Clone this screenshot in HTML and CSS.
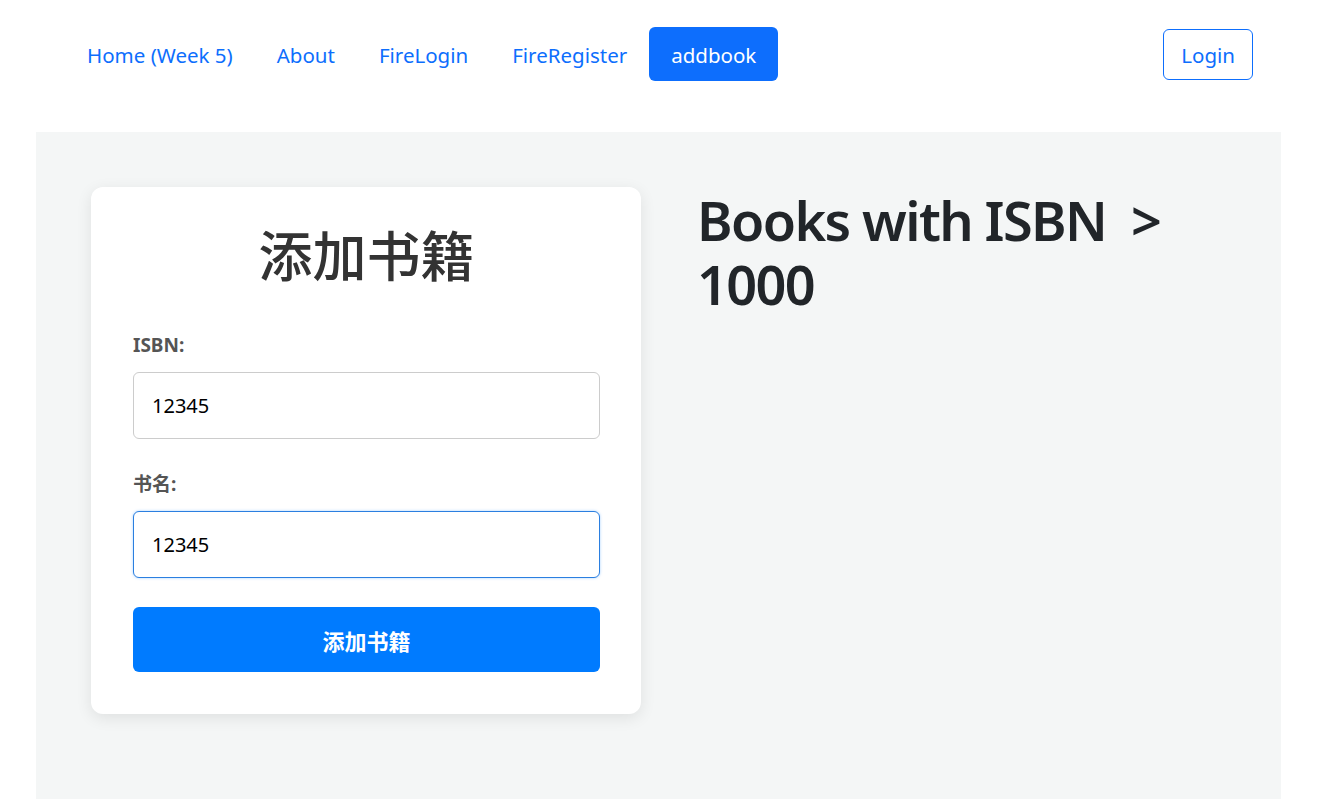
FILE: index.html
```html
<!DOCTYPE html>
<html lang="zh">
<head>
<meta charset="utf-8">
<title>addbook</title>
<link rel="stylesheet" href="styles.css">
</head>
<body>
<header class="navbar">
  <nav class="nav-links">
    <a class="nav-link" href="#">Home (Week 5)</a>
    <a class="nav-link" href="#">About</a>
    <a class="nav-link" href="#">FireLogin</a>
    <a class="nav-link" href="#">FireRegister</a>
    <a class="nav-link active" href="#">addbook</a>
  </nav>
  <a class="login-btn" href="#">Login</a>
</header>
<main class="page">
  <section class="card">
    <h1 class="card-title">添加书籍</h1>
    <form class="form">
      <div class="field">
        <label class="label" for="isbn">ISBN:</label>
        <input class="input" id="isbn" type="text" value="12345">
      </div>
      <div class="field">
        <label class="label" for="name">书名:</label>
        <input class="input focused" id="name" type="text" value="12345">
      </div>
      <button class="submit" type="button">添加书籍</button>
    </form>
  </section>
  <section class="results">
    <h2 class="results-title">Books with ISBN &nbsp;&gt; 1000</h2>
  </section>
</main>
</body>
</html>
```
FILE: styles.css
```css
* { box-sizing: border-box; }
html, body { margin: 0; padding: 0; background: #fff; }
body {
  font-family: "Noto Sans", "Noto Sans CJK SC", sans-serif;
  color: #212529;
  height: 799px;
  overflow: hidden;
}
.navbar {
  display: flex;
  align-items: flex-start;
  justify-content: space-between;
  padding: 27px 69px 0 65px;
  height: 132px;
}
.nav-links { display: flex; align-items: center; }
.nav-link {
  font-size: 20.5px;
  line-height: 30px;
  padding: 13px 22px 11px;
  color: #0d6efd;
  text-decoration: none;
  border-radius: 6px;
}
.nav-link.active { background: #0d6efd; color: #fff; }
.login-btn {
  margin-top: 2px;
  font-size: 20.5px;
  line-height: 29px;
  padding: 11px 17px 9px;
  color: #0d6efd;
  border: 1px solid #0d6efd;
  border-radius: 6px;
  text-decoration: none;
}
.page {
  margin: 0 41px 0 36px;
  background: #f4f6f6;
  height: 667px;
  padding: 55px 55px;
  display: flex;
  gap: 56px;
  align-items: flex-start;
}
.card {
  width: 550px;
  flex: none;
  background: #fff;
  border-radius: 12px;
  box-shadow: 0 4px 16px rgba(0,0,0,0.09);
  padding: 34px 41px 42px 42px;
}
.card-title {
  margin: 0 0 38px;
  text-align: center;
  font-size: 54px;
  line-height: 70px;
  font-weight: 500;
  color: #333;
}
.form { display: flex; flex-direction: column; }
.field { display: flex; flex-direction: column; margin-bottom: 29px; }
.label {
  padding-top: 3px;
  font-size: 19px;
  line-height: 26px;
  font-weight: 700;
  color: #555;
  margin-bottom: 14px;
}
.input {
  height: 67px;
  padding: 0 18px;
  font-family: inherit;
  font-size: 20px;
  color: #000;
  border: 1px solid #ccc;
  border-radius: 6px;
  background: #fff;
  outline: none;
}
.input.focused {
  border-color: #2b7fe0;
  box-shadow: 0 0 3px rgba(0,123,255,0.35);
}
.submit {
  height: 65px;
  border: none;
  border-radius: 6px;
  background: #007bff;
  color: #fff;
  font-family: inherit;
  font-size: 22px;
  font-weight: 700;
}
.results { width: 540px; }
.results-title {
  margin: 1px 0 0;
  font-size: 54px;
  line-height: 64px;
  font-weight: 600;
  color: #212529;
  letter-spacing: -1.6px;
}
```
